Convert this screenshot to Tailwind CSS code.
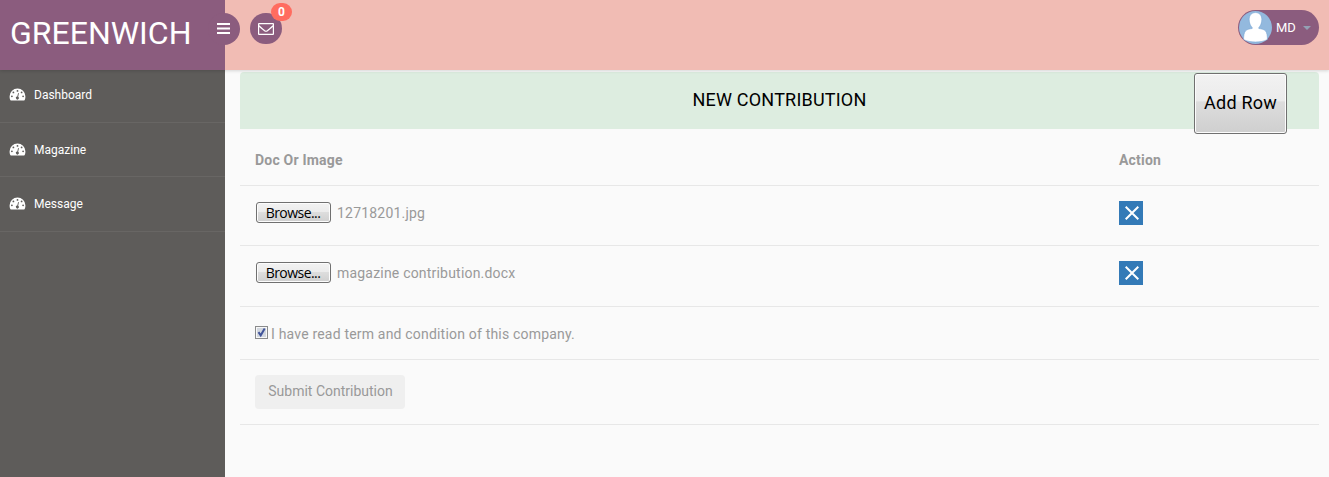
<!DOCTYPE html>
<html lang="en">
<head>
<meta charset="utf-8">
<title>Greenwich - New Contribution</title>
<script src="https://cdn.jsdelivr.net/npm/@tailwindcss/browser@4"></script>
</head>
<body class="h-[477px] overflow-hidden bg-[#fafafa] font-['Roboto',sans-serif] text-[14px] text-[#999]">
<svg class="hidden">
  <symbol id="gauge" viewBox="0 0 16 13">
    <path fill="#fff" d="M8 .5a7.9 7.9 0 0 0-7.9 7.7c0 1.600.2 2.900.9 4 .2.3.5.4.8.4h12.400c.3 0 .6-.1.8-.4.7-1.100.9-2.400.9-4A7.900 7.900 0 0 0 8 .5z"/>
    <g fill="#5e5c5a"><circle cx="8" cy="2.900" r=".9"/><circle cx="3.900" cy="4.400" r=".9"/><circle cx="12.100" cy="4.400" r=".9"/><circle cx="2.400" cy="8.300" r=".9"/><circle cx="13.600" cy="8.300" r=".9"/><path d="M8.600 5.100l.8.2-.7 3.400a1.500 1.500 0 1 1-.9-.2z"/></g>
  </symbol>
</svg>
<div class="flex h-full flex-col">
  <header class="relative z-10 flex h-[70px] shrink-0 bg-[#f1bcb4] shadow-[0_1px_3px_rgba(0,0,0,0.15)]">
    <div class="h-[70px] w-[225px] bg-[#8b5c7e] pt-[9px] pl-[10px] text-[32px] leading-[48px] text-white"><span>GREENWICH</span></div>
    <button class="absolute top-[13px] left-[208px] flex size-8 items-center justify-center rounded-full bg-[#8b5c7e] pr-px pb-px">
      <svg class="h-[11px] w-[13px]" viewBox="0 0 13 11"><path fill="#fff" d="M0 0h13v2H0zM0 4.500h13v2H0zM0 9h13v2H0z"/></svg>
    </button>
    <button class="relative mt-[13px] ml-[25px] flex h-[31px] w-8 items-center justify-center rounded-full bg-[#8b5c7e]">
      <svg class="h-[12px] w-[16px]" viewBox="0 0 16 12" fill="none" stroke="#fff" stroke-width="1.200"><rect x=".6" y=".6" width="14.800" height="10.800" rx=".4"/><path d="M.8 2.800C3 4.800 5 6.300 6.600 7.700 7.500 8.400 8.500 8.400 9.400 7.700 11 6.300 13 4.800 15.200 2.800"/></svg>
      <span class="absolute -top-[10px] left-[21px] flex h-[18px] w-[21px] items-center justify-center rounded-full bg-[#ff6c60] text-[12px] font-bold text-white">0</span>
    </button>
    <button class="mt-[10px] mr-[10px] ml-auto flex h-[35px] w-[81px] items-center rounded-full bg-[#8b5c7e] pl-px">
      <svg class="size-[33px]" viewBox="0 0 33 33"><circle cx="16.500" cy="16.500" r="16.500" fill="#93b9de"/><path fill="#fff" stroke="#6f9fd0" stroke-width=".5" d="M16.500 1.600c4 0 6.300 2.900 6.300 7 0 3.200-1.200 6.300-3 7.900v1c2.400.4 5 .7 6.600 2.300 1.700 1.800 2 5.700 2 8.700-3.200 1.800-7.500 2.500-11.900 2.500s-8.700-.7-11.900-2.500c0-3 .3-6.900 2-8.700 1.600-1.600 4.200-1.900 6.600-2.300v-1c-1.800-1.600-3-4.700-3-7.900 0-4.100 2.300-7 6.300-7z"/></svg>
      <span class="ml-[4px] text-[13px] text-white"><span>MD</span></span>
      <svg class="ml-[7px] h-[4px] w-[8px]" viewBox="0 0 8 4"><path fill="#94a0b4" d="M0 0h8L4 4z"/></svg>
    </button>
  </header>
  <div class="flex grow">
    <aside class="w-[225px] bg-[#5e5c5a] text-[12px] text-white">
      <nav>
        <a class="flex h-[53px] items-center gap-[8px] border-b border-[#686664] pb-[3px] pl-[10px]"><svg class="mb-px -ml-px h-[13px] w-[17px]"><use href="#gauge"/></svg><span>Dashboard</span></a>
        <a class="flex h-[54px] items-center gap-[8px] border-b border-[#686664] pl-[10px]"><svg class="mb-px -ml-px h-[13px] w-[17px]"><use href="#gauge"/></svg><span>Magazine</span></a>
        <a class="flex h-[55px] items-center gap-[8px] border-b border-[#686664] pl-[10px]"><svg class="mb-[2px] -ml-px h-[13px] w-[17px]"><use href="#gauge"/></svg><span>Message</span></a>
      </nav>
    </aside>
    <main class="w-[1104px] pt-[2px] pr-[10px] pl-[15px]">
      <div class="relative h-[57px] rounded-t-[4px] bg-[#ddede0] text-center text-[18px] leading-[56px] text-black"><span class="tracking-[0.2px]">NEW CONTRIBUTION</span>
        <button class="absolute top-[1px] left-[954px] h-[61px] w-[93px] rounded-[3px] border border-[#707070] bg-[linear-gradient(#f2f2f2,#ebebeb_46%,#dddddd_47%,#cfcfcf)] pb-[2px] text-[18px] leading-[57px] whitespace-nowrap shadow-[inset_0_0_0_1px_#fcfcfc]"><span class="tracking-[0.2px]">Add Row</span></button>
      </div>
      <div class="flex h-[57px] items-center border-b border-[#e7e7e7] pt-[6px] pl-[15px] font-bold tracking-[0.2px]"><span class="w-[864px]"><span>Doc Or Image</span></span><span>Action</span></div>
      <div class="flex h-[60px] items-center border-b border-[#e7e7e7] pb-[5px] pl-[16px]">
        <button class="mb-[2px] h-[21px] w-[75px] rounded-[3px] border border-[#707070] bg-[linear-gradient(#f2f2f2,#ebebeb_49%,#dddddd_50%,#cfcfcf)] pr-px font-['Open_Sans',sans-serif] text-[14px] leading-[19px] tracking-[-0.550px] text-black shadow-[inset_0_0_0_1px_#fcfcfc]"><span>Browse...</span></button>
        <span class="ml-[6px] w-[782px] tracking-[0.2px]"><span>12718201.jpg</span></span>
        <button class="flex size-6 items-center justify-center bg-[#337ab7] pl-px"><svg class="size-[14px]" viewBox="0 0 14 14"><path stroke="#fff" stroke-width="2" d="M.7.7l12.600 12.600M13.300.7L.7 13.300"/></svg></button>
      </div>
      <div class="flex h-[61px] items-center border-b border-[#e7e7e7] pb-[6px] pl-[16px]">
        <button class="mb-[2px] h-[21px] w-[75px] rounded-[3px] border border-[#707070] bg-[linear-gradient(#f2f2f2,#ebebeb_49%,#dddddd_50%,#cfcfcf)] pr-px font-['Open_Sans',sans-serif] text-[14px] leading-[19px] tracking-[-0.550px] text-black shadow-[inset_0_0_0_1px_#fcfcfc]"><span>Browse...</span></button>
        <span class="ml-[6px] w-[782px] tracking-[0.2px]"><span>magazine contribution.docx</span></span>
        <button class="flex size-6 items-center justify-center bg-[#337ab7] pl-px"><svg class="size-[14px]" viewBox="0 0 14 14"><path stroke="#fff" stroke-width="2" d="M.7.7l12.600 12.600M13.300.7L.7 13.300"/></svg></button>
      </div>
      <label class="flex h-[53px] items-center border-b border-[#e7e7e7] pl-[15px]">
        <svg class="mb-[2px] size-[13px]" viewBox="0 0 13 13"><rect x=".5" y=".5" width="12" height="12" fill="#f8f8f8" stroke="#8a8b8c"/><path fill="#d3d8e0" d="M2 2h9v9H2z"/><path fill="none" stroke="#41549a" stroke-width="2" d="M3.500 6.200l2.200 3.100L9.700 2.500"/></svg>
        <span class="ml-[3px] pt-[2px] tracking-[0.190px]"><span>I have read term and condition of this company.</span></span>
      </label>
      <div class="flex h-[65px] items-center border-b border-[#e7e7e7] pl-[15px]">
        <button class="h-[34px] w-[150px] rounded-[4px] bg-[#efefef] pb-[2px] pl-px"><span>Submit Contribution</span></button>
      </div>
    </main>
  </div>
</div>
</body>
</html>
